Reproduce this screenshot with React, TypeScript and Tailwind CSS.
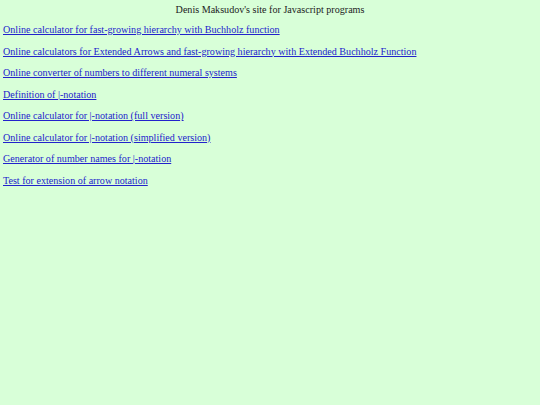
const links = [
  "Online calculator for fast-growing hierarchy with Buchholz function",
  "Online calculators for Extended Arrows and fast-growing hierarchy with Extended Buchholz Function",
  "Online converter of numbers to different numeral systems",
  "Definition of |-notation",
  "Online calculator for |-notation (full version)",
  "Online calculator for |-notation (simplified version)",
  "Generator of number names for |-notation",
  "Test for extension of arrow notation",
];

export default function App() {
  return (
    <div className="min-h-[405px] bg-[#d8ffd8] px-[3px] pt-[3px] font-['Liberation_Serif',serif] text-[10.1px] leading-[13px] text-[#222]">
      <div className="text-center">Denis Maksudov's site for Javascript programs</div>
      <div className="mt-[7px] flex flex-col gap-[8.57px]">
        {links.map(l => (
          <div key={l}>
            <a href="#" className="text-[#2222cc] underline">
              {l}
            </a>
          </div>
        ))}
      </div>
    </div>
  );
}
